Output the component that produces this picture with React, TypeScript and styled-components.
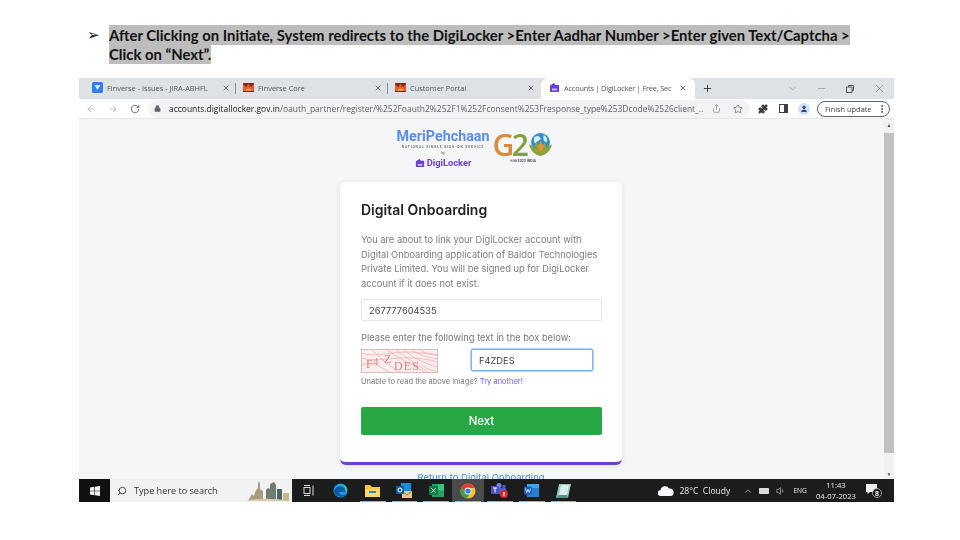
import React from 'react';
import styled, { createGlobalStyle } from 'styled-components';
import { ArrowLeft, ArrowRight, RotateCw, Lock, Share, Star, Puzzle, EllipsisVertical, X, Plus, ChevronDown, ChevronUp, Minus, Search, Volume1, User } from 'lucide-react';

const Global = createGlobalStyle`
  html, body { margin: 0; padding: 0; background: #fff; }
  body { width: 960px; height: 540px; overflow: hidden; font-family: "Open Sans", "Liberation Sans", sans-serif; }
`;

const Slide = styled.div`
  width: 960px;
  height: 540px;
  padding: 26px 66px 0 79px;
  box-sizing: border-box;
  display: flex;
  flex-direction: column;
`;

const Heading = styled.div`
  display: flex;
  height: 52px;
  padding-left: 8px;
  font: 700 14.86px/19px Lato, "Liberation Sans", sans-serif;
  color: #111;
`;

const Bullet = styled.span`
  width: 22px;
  flex: none;
  font-size: 15px;
  font-family: "DejaVu Sans", sans-serif;
`;

const Mark = styled.span`
  background: #bdbdbd;
  padding: 1px 0;
  -webkit-box-decoration-break: clone;
  box-decoration-break: clone;
`;

const HeadingText = styled.div`
  width: 760px;
`;

const Window = styled.div`
  width: 815px;
  height: 424px;
  display: flex;
  flex-direction: column;
  overflow: hidden;
  filter: blur(0.35px);
`;

const TabStrip = styled.div`
  height: 21px;
  flex: none;
  background: #dee1e6;
  display: flex;
  align-items: stretch;
  font-size: 7.4px;
  color: #555;
`;

const Tab = styled.div<{ $w: number; $active?: boolean; $divider?: boolean }>`
  width: ${p => p.$w}px;
  flex: none;
  box-sizing: border-box;
  display: flex;
  align-items: center;
  gap: 4px;
  padding: 0 ${p => (p.$active ? 8 : 6)}px 2px ${p => (p.$active ? 8 : 7)}px;
  background: ${p => (p.$active ? '#fff' : 'transparent')};
  border-radius: ${p => (p.$active ? '7px 7px 0 0' : '0')};
  position: relative;
  letter-spacing: ${p => (p.$active ? '-0.2px' : '0')};
  &::after {
    content: '';
    display: ${p => (p.$divider ? 'block' : 'none')};
    position: absolute;
    right: 0;
    top: 5px;
    bottom: 5px;
    width: 1px;
    background: #8a8d91;
  }
`;

const FirstTab = styled(Tab)`
  padding-left: 13px;
`;

const TabTitle = styled.span`
  flex: 1;
  overflow: hidden;
  white-space: nowrap;
`;

const WinControls = styled.div`
  margin-left: auto;
  display: flex;
  align-items: center;
  gap: 18px;
  padding-right: 8px;
  color: #666;
`;

const NewTab = styled.div`
  display: flex;
  align-items: center;
  padding-left: 7px;
  color: #333;
`;

const Toolbar = styled.div`
  height: 20px;
  flex: none;
  background: #fff;
  display: flex;
  align-items: center;
  color: #5f6368;
  border-bottom: 1px solid #e4e6e8;
  box-sizing: border-box;
  padding-left: 7px;
`;

const NavIcons = styled.div`
  width: 62px;
  flex: none;
  display: flex;
  gap: 12px;
  align-items: center;
`;

const Omnibox = styled.div`
  width: 602px;
  height: 18px;
  flex: none;
  background: #f1f3f4;
  border-radius: 9px;
  display: flex;
  align-items: center;
  box-sizing: border-box;
  padding: 0 7px 0 6px;
  gap: 8px;
  font-size: 8.46px;
  color: #5f6368;
  white-space: nowrap;
`;

const Url = styled.span`
  flex: 1;
  overflow: hidden;
`;

const Host = styled.span`
  color: #202124;
`;

const OmniActions = styled.div`
  display: flex;
  align-items: center;
  gap: 12px;
`;

const ToolIcons = styled.div`
  display: flex;
  align-items: center;
  gap: 10px;
  padding-left: 8px;
`;

const SidePanel = styled.span`
  width: 9px;
  height: 9px;
  box-sizing: border-box;
  border: 1.4px solid #3c4043;
  border-right-width: 4px;
  display: block;
  margin-left: 1px;
`;

const Avatar = styled.span`
  width: 12px;
  height: 12px;
  border-radius: 50%;
  background: #d3e3fd;
  color: #3c4a5e;
  display: flex;
  align-items: center;
  justify-content: center;
`;

const UpdatePill = styled.div`
  width: 73px;
  height: 16px;
  flex: none;
  box-sizing: border-box;
  margin-left: -3px;
  border: 1px solid #5f6368;
  border-radius: 8px;
  display: flex;
  align-items: center;
  justify-content: space-between;
  padding: 0 2px 0 7px;
  font-size: 7.4px;
  color: #444;
`;

const Viewport = styled.div`
  flex: 1;
  min-height: 0;
  display: flex;
  background: #f4f6f8;
  overflow: hidden;
`;

const PageBody = styled.div`
  flex: 1;
  display: flex;
  flex-direction: column;
  align-items: center;
  padding: 9px 0 0 0;
  box-sizing: border-box;
`;

const LogoRow = styled.div`
  height: 54px;
  display: flex;
  gap: 3px;
  margin-right: 13px;
  flex: none;
`;

const BrandCol = styled.div`
  display: flex;
  flex-direction: column;
  align-items: center;
`;

const BrandName = styled.div`
  font: 700 14.3px/16px Roboto, sans-serif;
  color: #5b8def;
`;

const BrandTag = styled.div`
  font: 700 3.3px/5px Roboto, sans-serif;
  letter-spacing: 0.85px;
  color: #777;
  white-space: nowrap;
  margin-top: 1px;
`;

const BrandBy = styled.div`
  font: 400 4px/6px "Liberation Serif", serif;
  color: #444;
`;

const DigiLine = styled.div`
  display: flex;
  align-items: center;
  gap: 2px;
  font: 700 9.3px/11px Roboto, sans-serif;
  color: #6a3fe0;
  margin-top: 1px;
`;

const G20Col = styled.div`
  display: flex;
  flex-direction: column;
  align-items: center;
  padding-top: 3px;
`;

const G20Line = styled.div`
  display: flex;
  align-items: center;
  font: 600 30px/28px "Open Sans", sans-serif;
  letter-spacing: -2.5px;
  color: #d98a3a;
  height: 28px;
`;

const G20Green = styled.span`
  color: #7fa23c;
  margin-right: 2px;
`;

const G20Tag = styled.div`
  font: 700 3.6px/6px Roboto, sans-serif;
  color: #555;
  margin-top: -1px;
`;

const Card = styled.div`
  width: 282px;
  height: 283px;
  flex: none;
  box-sizing: border-box;
  background: #fff;
  border-radius: 6px;
  border-bottom: 3px solid #6a3fe0;
  box-shadow: 0 1px 6px rgba(0, 0, 0, 0.09);
  padding: 19px 20px 0 21px;
  margin-right: 1px;
  font-family: Inter, "Open Sans", sans-serif;
`;

const CardTitle = styled.div`
  font: 600 14px/18px Inter, "Open Sans", sans-serif;
  color: #1f1f1f;
  margin-bottom: 14px;
`;

const Para = styled.div`
  font-size: 9.3px;
  line-height: 14.5px;
  color: #7d7d7d;
  margin-bottom: 8px;
`;

const TextField = styled.div<{ $focused?: boolean }>`
  height: 22px;
  box-sizing: border-box;
  width: ${p => (p.$focused ? '122px' : '100%')};
  flex: none;
  display: flex;
  align-items: center;
  padding-left: 7px;
  font-size: 9.3px;
  color: #444;
  background: #fff;
  border-radius: 2px;
  border: 1px solid ${p => (p.$focused ? '#7fb3f0' : '#e6e6e6')};
  box-shadow: ${p => (p.$focused ? '0 0 0 1px #b5d4f7' : 'none')};
`;

const FieldLabel = styled.div`
  font-size: 9.3px;
  line-height: 14px;
  color: #777;
  margin: 10px 0 4px;
`;

const CaptchaRow = styled.div`
  display: flex;
  align-items: flex-start;
  gap: 33px;
`;

const Hint = styled.div`
  font-size: 7.5px;
  line-height: 10px;
  color: #777;
  margin-top: 4px;
`;

const HintLink = styled.span`
  color: #6a5ff0;
`;

const NextButton = styled.div`
  height: 28px;
  margin-top: 20px;
  background: #28a745;
  border-radius: 2px;
  color: #fff;
  font-size: 11.4px;
  font-weight: 500;
  display: flex;
  align-items: center;
  justify-content: center;
`;

const ReturnLink = styled.div`
  font: 400 9.5px/14px Inter, "Open Sans", sans-serif;
  color: #4a90e2;
  margin-top: 6px;
  margin-right: 1px;
  flex: none;
`;

const Scrollbar = styled.div`
  width: 10px;
  flex: none;
  background: #f1f1f1;
  display: flex;
  flex-direction: column;
  align-items: center;
  font-size: 5px;
  color: #555;
`;

const ArrowUpCell = styled.span`
  height: 14px;
  line-height: 13px;
  flex: none;
`;

const ArrowDownCell = styled.span`
  height: 10px;
  line-height: 10px;
  flex: none;
`;

const Thumb = styled.div`
  width: 100%;
  height: 320px;
  flex: none;
  background: #c1c1c1;
  margin-bottom: 16px;
`;

const Taskbar = styled.div`
  height: 23px;
  flex: none;
  background: #1c1c1c;
  display: flex;
  align-items: center;
  color: #e8e8e8;
`;

const StartBtn = styled.div`
  width: 31px;
  height: 100%;
  flex: none;
  display: flex;
  align-items: center;
  justify-content: center;
  background: #111;
`;

const SearchBox = styled.div`
  width: 182px;
  height: 100%;
  flex: none;
  box-sizing: border-box;
  background: #f2f2f2;
  display: flex;
  align-items: center;
  color: #333;
  padding: 0 2px 0 7px;
  gap: 7px;
  font-size: 9.1px;
`;

const SearchText = styled.span`
  flex: 1;
`;

const MirroredSearch = styled(Search)`
  transform: scaleX(-1);
`;

const TaskIcon = styled.div<{ $active?: boolean; $open?: boolean }>`
  width: 31.8px;
  height: 100%;
  flex: none;
  box-sizing: border-box;
  display: flex;
  align-items: center;
  justify-content: center;
  position: relative;
  background: ${p => (p.$active ? '#4a4a4a' : 'transparent')};
  &::after {
    content: '';
    display: ${p => (p.$open ? 'block' : 'none')};
    position: absolute;
    left: 3px;
    right: 3px;
    bottom: 0;
    height: 1px;
    background: #76b9ed;
  }
`;

const TaskIcons = styled.div`
  display: flex;
  height: 100%;
`;

const TaskViewBtn = styled(TaskIcon)`
  width: 33px;
`;

const Tray = styled.div`
  margin-left: auto;
  display: flex;
  align-items: center;
  height: 100%;
  font-size: 8.6px;
  padding-right: 12px;
  gap: 6px;
`;

const Weather = styled.div`
  display: flex;
  align-items: center;
  gap: 5px;
  margin-right: 7px;
`;

const Battery = styled.span`
  width: 10px;
  height: 6px;
  background: #ddd;
  border-radius: 1px;
  display: block;
  margin-right: 1px;
`;

const Eng = styled.span`
  font-size: 6.6px;
  margin: 0 3px 0 1px;
`;

const Clock = styled.div`
  font-size: 7.7px;
  line-height: 11px;
  text-align: center;
  margin-right: 4px;
`;

const Jira = () => (
  <svg width="11" height="11" viewBox="0 0 11 11">
    <rect width="11" height="11" rx="1.5" fill="#2f80ed" />
    <path d="M2.5 3h6l-3 5z" fill="#d8ecff" />
  </svg>
);

const FinLogo = () => (
  <svg width="11" height="9" viewBox="0 0 11 9">
    <rect width="11" height="9" fill="#7d2b18" />
    <path d="M0 1l3 3 2.5-3 2.5 3 3-3v7H0z" fill="#ea5b2c" />
    <path d="M3 6h5v1.4H3z" fill="#f7c948" />
  </svg>
);

const DigiIcon = ({ size = 11 }: { size?: number }) => (
  <svg width={size} height={size} viewBox="0 0 11 11">
    <path d="M1 3.5 5 1l1.5 2H10v7H1z" fill="#6a3fe0" />
    <path d="M3 6.5h5v2H3z" fill="#cfc2f7" />
  </svg>
);

const WinLogo = () => (
  <svg width="10" height="10" viewBox="0 0 10 10" fill="#f2f2f2">
    <path d="M0 1.4 4.3.8v3.9H0zM4.9.7 10 0v4.7H4.9zM0 5.3h4.3v3.9L0 8.6zM4.9 5.3H10V10l-5.1-.7z" />
  </svg>
);

const CityArt = () => (
  <svg width="44" height="21" viewBox="0 0 44 21">
    <path d="M2 21l4-7 2 2 2-6 2-2V4l1-3 1 3v5l3 2v10z" fill="#a89a7c" />
    <path d="M20 21V10l2-2 2 1v-5l4-2 2 3v16z" fill="#6e7c72" />
    <path d="M31 21V9h5v12z" fill="#4f6660" />
    <path d="M37 21v-8h6v8z" fill="#c9b48c" />
    <path d="M0 21c8-3 30-3 44 0z" fill="#d9cdb0" />
  </svg>
);

const TaskView = () => (
  <svg width="12" height="11" viewBox="0 0 12 11" fill="none" stroke="#ddd" strokeWidth="1">
    <rect x="1" y="2.5" width="6" height="6" />
    <path d="M1 .5h6M1 10.500h6M10 .5v10" />
  </svg>
);

const Edge = () => (
  <svg width="15" height="15" viewBox="0 0 15 15">
    <circle cx="7.5" cy="7.5" r="7" fill="#1b9de2" />
    <path d="M1 9C1 4 7 2 11 5c2 1.500 2 4 0 4H6c0 3 4 4 8 2-2 4-11 4-13-2z" fill="#0c59a4" />
    <path d="M14 8c0-4-4-7.500-8-6.500 4 0 6 2 6 4.500 0 1.500 1 2 2 2z" fill="#5fd16a" />
  </svg>
);

const Folder = () => (
  <svg width="15" height="13" viewBox="0 0 15 13">
    <path d="M0 1h5l2 2h8v10H0z" fill="#f6c544" />
    <path d="M0 5h15v8H0z" fill="#ffd867" />
    <path d="M4 7h7v2H4z" fill="#2b88d8" />
  </svg>
);

const Outlook = () => (
  <svg width="16" height="15" viewBox="0 0 16 15">
    <rect x="5" y="0" width="10" height="9" fill="#1490df" />
    <rect x="6" y="8" width="10" height="7" fill="#f0c088" />
    <path d="M6 8l5 4 5-4" fill="none" stroke="#b9783c" />
    <rect x="0" y="3" width="8" height="8" rx="1" fill="#0f5fa8" />
    <circle cx="4" cy="7" r="2" fill="none" stroke="#fff" strokeWidth="1" />
  </svg>
);

const Excel = () => (
  <svg width="15" height="13" viewBox="0 0 15 13">
    <rect x="3" y="0" width="12" height="13" fill="#21a366" />
    <rect x="9" y="0" width="6" height="6.500" fill="#33c481" />
    <rect x="0" y="2" width="9" height="9" rx="1" fill="#107c41" />
    <path d="M2.500 4.500l4 4M6.500 4.500l-4 4" stroke="#fff" strokeWidth="1" />
  </svg>
);

const Chrome = () => (
  <svg width="16" height="16" viewBox="0 0 16 16">
    <circle cx="8" cy="8" r="7.500" fill="#fbc02d" />
    <path d="M8 .5A7.500 7.500 0 0 0 1.500 4.200L5 10l3-5h6.500A7.500 7.500 0 0 0 8 .5z" fill="#e53935" />
    <path d="M1.500 4.200A7.500 7.500 0 0 0 7 15.400L10.500 9.500H5z" fill="#43a047" />
    <circle cx="8" cy="8" r="3.400" fill="#fff" />
    <circle cx="8" cy="8" r="2.600" fill="#1e88e5" />
  </svg>
);

const Teams = () => (
  <svg width="17" height="15" viewBox="0 0 17 15">
    <circle cx="8" cy="2.500" r="2.500" fill="#7b83eb" />
    <circle cx="13" cy="3.500" r="1.800" fill="#5059c9" />
    <path d="M5 5h10v6H5z" fill="#5059c9" />
    <rect x="0" y="3" width="8" height="8" rx="1" fill="#4b53bc" />
    <path d="M2 5h4M4 5v4.500" stroke="#fff" strokeWidth="1" />
    <circle cx="13" cy="11" r="4" fill="#d92b2b" />
    <path d="M13 9v4" stroke="#fff" strokeWidth="1.200" />
  </svg>
);

const Word = () => (
  <svg width="15" height="13" viewBox="0 0 15 13">
    <rect x="3" y="0" width="12" height="13" fill="#2b7cd3" />
    <rect x="3" y="0" width="12" height="4" fill="#41a5ee" />
    <rect x="0" y="2.500" width="8" height="8" rx="1" fill="#185abd" />
    <path d="M1.500 4.500l1.200 4 1.300-3 1.300 3 1.200-4" fill="none" stroke="#fff" strokeWidth="0.800" />
  </svg>
);

const Notes = () => (
  <svg width="15" height="14" viewBox="0 0 15 14">
    <path d="M3 0h12l-3 14H0z" fill="#8fc9c0" />
    <path d="M5 1h8l-2 10H3z" fill="#dceee9" />
    <path d="M0 14l3-3h8l1 3z" fill="#5a8f88" />
  </svg>
);

const Cloud = () => (
  <svg width="16" height="10" viewBox="0 0 16 10">
    <path d="M3 10a3 3 0 0 1-.4-6A4.500 4.500 0 0 1 11 2.500 3.800 3.800 0 0 1 12.500 10z" fill="#f4f8fc" />
  </svg>
);

const Notify = () => (
  <svg width="16" height="15" viewBox="0 0 16 15">
    <path d="M0 1h11v8H4L1.500 11V9H0z" fill="#eee" />
    <circle cx="11" cy="10" r="4.500" fill="#1c1c1c" stroke="#ccc" strokeWidth="0.700" />
    <text x="11" y="12.500" textAnchor="middle" fontSize="7" fontWeight="700" fill="#eee" fontFamily="Open Sans">8</text>
  </svg>
);

const Captcha = () => (
  <svg width="77" height="24" viewBox="0 0 77 24">
    <rect width="77" height="24" fill="#fbeeee" stroke="#c08a8a" strokeWidth="1" />
    <g fill="none" stroke="#eda9a9" strokeWidth="0.700">
      <path d="M0 4c20 6 30-6 77 2M0 9c22 6 40-6 77 4M10 0c10 10 20 18 30 24M25 0c10 8 30 18 40 24M42 0c8 8 20 14 35 18M0 16c12-4 20 2 30 8M50 0c6 6 16 8 27 10M34 0c8 7 24 16 34 24M58 0c5 4 12 6 19 6M60 15c4 4 10 7 17 7" />
    </g>
    <g fill="#e07e7e" fontFamily="Liberation Serif, serif">
      <text x="5" y="19" fontSize="12">F</text>
      <text x="12" y="16" fontSize="11">4</text>
      <text x="23" y="14" fontSize="12">Z</text>
      <text x="33" y="21" fontSize="12" textLength="25">DES</text>
    </g>
  </svg>
);

const Globe = () => (
  <svg width="25" height="27" viewBox="0 0 24 26">
    <circle cx="12" cy="10" r="9" fill="#2f8fc9" />
    <path d="M6 5c3-2 5-1 6 1s-3 2-4 4-3 0-2-5zM15 3c3 1 4 4 3 7-2 0-4-2-3-7z" fill="#d6ecf7" />
    <path d="M12 23C5 22 2 16 1 12c3 1 5 2 6 4-1-3 0-5 1-6 1 1 3 3 4 6 1-3 3-5 4-6 1 1 2 3 1 6 1-2 3-3 6-4-1 4-4 10-11 11z" fill="#8aa53a" />
    <path d="M9 14l3-5 3 5-3 6z" fill="#e8913a" />
  </svg>
);

const App = () => (
  <>
    <Global />
    <Slide>
      <Heading>
        <Bullet>➢</Bullet>
        <HeadingText>
          <Mark>After Clicking on Initiate, System redirects to the DigiLocker &gt;Enter Aadhar Number &gt;Enter given Text/Captcha &gt; Click on “Next”.</Mark>
        </HeadingText>
      </Heading>
      <Window>
        <TabStrip>
          <FirstTab $w={157} $divider>
            <Jira />
            <TabTitle>Finverse - Issues - JIRA-ABHFL</TabTitle>
            <X size={8} strokeWidth={2.4} />
          </FirstTab>
          <Tab $w={152} $divider>
            <FinLogo />
            <TabTitle>Finverse Core</TabTitle>
            <X size={8} strokeWidth={2.4} />
          </Tab>
          <Tab $w={153}>
            <FinLogo />
            <TabTitle>Customer Portal</TabTitle>
            <X size={8} strokeWidth={2.4} />
          </Tab>
          <Tab $active $w={154}>
            <DigiIcon />
            <TabTitle>Accounts | DigiLocker | Free, Sec</TabTitle>
            <X size={8} strokeWidth={2.4} />
          </Tab>
          <NewTab><Plus size={11} strokeWidth={2} /></NewTab>
          <WinControls>
            <ChevronDown size={11} strokeWidth={1} />
            <Minus size={11} strokeWidth={1} />
            <svg width="10" height="10" viewBox="0 0 10 10" fill="none" stroke="#555"><path d="M1.500 3h5.500v5.500H1.500zM3.500 3V1.500H8.500V6.500H7" /></svg>
            <X size={13} strokeWidth={1} />
          </WinControls>
        </TabStrip>
        <Toolbar>
          <NavIcons>
            <ArrowLeft size={10} color="#b4b7bb" />
            <ArrowRight size={10} color="#b4b7bb" />
            <RotateCw size={10} />
          </NavIcons>
          <Omnibox>
            <Lock size={7} fill="#5f6368" />
            <Url><Host>accounts.digitallocker.gov.in</Host>/oauth_partner/register/%252Foauth2%252F1%252Fconsent%253Fresponse_type%253Dcode%2526client_...</Url>
            <OmniActions>
              <Share size={9} strokeWidth={1.4} />
              <Star size={10} strokeWidth={1.4} color="#3c4043" />
            </OmniActions>
          </Omnibox>
          <ToolIcons>
            <Puzzle size={10} fill="#3c4043" color="#3c4043" />
            <SidePanel />
            <Avatar><User size={8} fill="#3c4a5e" /></Avatar>
            <UpdatePill>
              Finish update
              <EllipsisVertical size={10} color="#333" />
            </UpdatePill>
          </ToolIcons>
        </Toolbar>
        <Viewport>
          <PageBody>
            <LogoRow>
              <BrandCol>
                <BrandName>MeriPehchaan</BrandName>
                <BrandTag>NATIONAL SINGLE SIGN-ON SERVICE</BrandTag>
                <BrandBy>by</BrandBy>
                <DigiLine><DigiIcon size={10} />DigiLocker</DigiLine>
              </BrandCol>
              <G20Col>
                <G20Line>G<G20Green>2</G20Green><Globe /></G20Line>
                <G20Tag>भारत 2023 INDIA</G20Tag>
              </G20Col>
            </LogoRow>
            <Card>
              <CardTitle>Digital Onboarding</CardTitle>
              <Para>
                You are about to link your DigiLocker account with Digital Onboarding application of Baldor Technologies Private Limited. You will be signed up for DigiLocker account if it does not exist.
              </Para>
              <TextField>267777604535</TextField>
              <FieldLabel>Please enter the following text in the box below:</FieldLabel>
              <CaptchaRow>
                <Captcha />
                <TextField $focused>F4ZDES</TextField>
              </CaptchaRow>
              <Hint>Unable to read the above image? <HintLink>Try another!</HintLink></Hint>
              <NextButton>Next</NextButton>
            </Card>
            <ReturnLink>Return to Digital Onboarding</ReturnLink>
          </PageBody>
          <Scrollbar>
            <ArrowUpCell>▲</ArrowUpCell>
            <Thumb />
            <ArrowDownCell>▼</ArrowDownCell>
          </Scrollbar>
        </Viewport>
        <Taskbar>
          <StartBtn><WinLogo /></StartBtn>
          <SearchBox>
            <MirroredSearch size={10} />
            <SearchText>Type here to search</SearchText>
            <CityArt />
          </SearchBox>
          <TaskViewBtn><TaskView /></TaskViewBtn>
          <TaskIcons>
            <TaskIcon><Edge /></TaskIcon>
            <TaskIcon $open><Folder /></TaskIcon>
            <TaskIcon $open><Outlook /></TaskIcon>
            <TaskIcon $open><Excel /></TaskIcon>
            <TaskIcon $active $open><Chrome /></TaskIcon>
            <TaskIcon $open><Teams /></TaskIcon>
            <TaskIcon $open><Word /></TaskIcon>
            <TaskIcon $open><Notes /></TaskIcon>
          </TaskIcons>
          <Tray>
            <Weather><Cloud />28°C&nbsp;&nbsp;Cloudy</Weather>
            <ChevronUp size={10} strokeWidth={1.4} />
            <Battery />
            <Volume1 size={10} strokeWidth={1.4} />
            <Eng>ENG</Eng>
            <Clock>11:43<br />04-07-2023</Clock>
            <Notify />
          </Tray>
        </Taskbar>
      </Window>
    </Slide>
  </>
);

export default App;
